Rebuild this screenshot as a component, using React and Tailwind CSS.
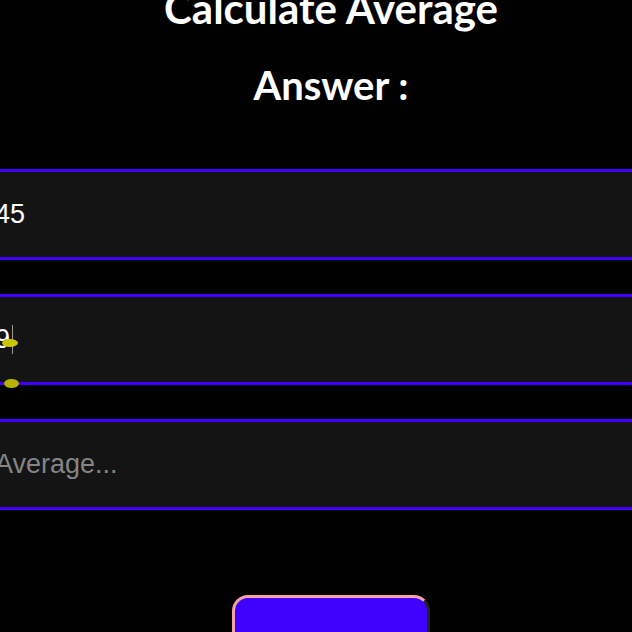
export default function App() {
  return (
    <div className="h-[632px] w-[632px] overflow-hidden bg-black">
      <div className="-ml-[22px] flex w-[706px] flex-col items-center">
        <h1 className="-mt-[20px] font-['Lato',sans-serif] text-[42px] font-bold leading-[56px] text-white">
          Calculate Average
        </h1>
        <h2 className="mt-[26px] font-['Lato',sans-serif] text-[40px] font-bold leading-[46px] text-white">
          Answer :
        </h2>
        <div className="mt-[61px] flex w-full flex-col gap-[34px]">
          <div className="flex h-[91px] items-center border-y-[3px] border-[#4000ff] bg-[#141414] px-[17px] font-['Liberation_Sans',sans-serif] text-[27px] text-white">
            45
          </div>
          <div className="relative flex h-[91px] items-center border-y-[3px] border-[#4000ff] bg-[#141414] px-[17px] font-['Liberation_Sans',sans-serif] text-[27px] text-white">
            9<span className="ml-[2px] h-[29px] w-[1px] bg-[#9a9a9a]" />
            <span className="absolute left-[24px] top-[42px] h-[8px] w-[16px] rounded-[50%] bg-[#c8c400]" />
            <span className="absolute -bottom-[6px] left-[26px] h-[9px] w-[15px] rounded-[50%] bg-[#b5b200]" />
          </div>
          <div className="flex h-[91px] items-center border-y-[3px] border-[#4000ff] bg-[#141414] px-[17px] font-['Liberation_Sans',sans-serif] text-[27px] text-[#858585]">
            Average...
          </div>
        </div>
        <button className="mt-[85px] h-[80px] w-[198px] rounded-[16px] border-[3px] border-[#f5a3a3] border-r-[#222] border-b-[#222] bg-[#4000ff]" />
      </div>
    </div>
  );
}
